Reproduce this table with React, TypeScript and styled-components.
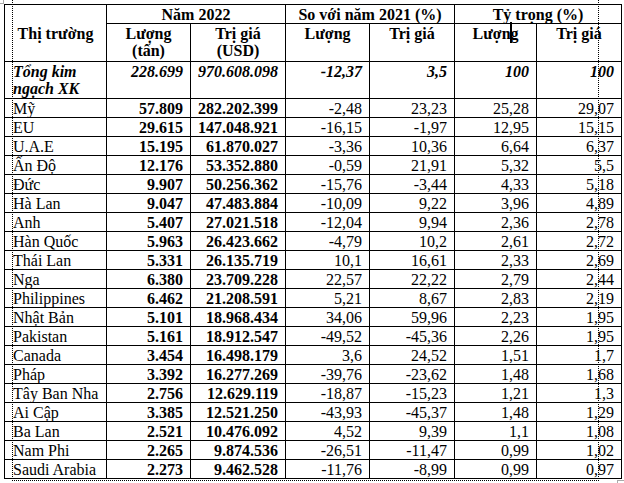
import React from "react";
import styled, { createGlobalStyle } from "styled-components";

const Global = createGlobalStyle`
  html, body { margin: 0; padding: 0; background: #fff; }
  body { font-family: "Liberation Serif", "Times New Roman", serif; color: #000; }
`;

const Page = styled.div`
  position: relative;
  width: 624px;
  height: 483px;
  overflow: hidden;
  padding: 4px 0 0 4px;
  box-sizing: border-box;
`;

const Table = styled.table`
  border-collapse: collapse;
  table-layout: fixed;
  width: 617px;
  font-size: 16px;
  line-height: 17px;
`;

const HeadCell = styled.th<{ $valign?: string }>`
  border: 1px solid #000;
  font-weight: bold;
  text-align: center;
  vertical-align: ${(p) => p.$valign || "top"};
  padding: 1px 4px 0 4px;
`;

const Row = styled.tr<{ $h: number }>`
  height: ${(p) => p.$h}px;
`;

const NameCell = styled.td<{ $total?: boolean }>`
  border: 1px solid #000;
  padding: ${(p) => (p.$total ? "1px 4px 0 8px" : "0 4px 0 8px")};
  text-align: left;
  vertical-align: ${(p) => (p.$total ? "top" : "middle")};
  font-weight: ${(p) => (p.$total ? "bold" : "normal")};
  font-style: ${(p) => (p.$total ? "italic" : "normal")};
  white-space: ${(p) => (p.$total ? "normal" : "nowrap")};
`;

const NumCell = styled.td<{ $bold?: boolean; $total?: boolean }>`
  border: 1px solid #000;
  padding: ${(p) => (p.$total ? "1px 7px 0 4px" : "0 7px 0 4px")};
  text-align: right;
  vertical-align: ${(p) => (p.$total ? "top" : "middle")};
  font-weight: ${(p) => (p.$bold || p.$total ? "bold" : "normal")};
  font-style: ${(p) => (p.$total ? "italic" : "normal")};
  white-space: nowrap;
`;

const DotV = styled.div<{ $x: number }>`
  position: absolute;
  left: ${(p) => p.$x}px;
  top: 0;
  height: 481px;
  border-left: 1px dotted #000;
  pointer-events: none;
`;

const DotH = styled.div`
  position: absolute;
  left: 12px;
  top: 480px;
  width: 587px;
  border-top: 1px dotted #000;
  pointer-events: none;
`;

const Caret = styled.div`
  position: absolute;
  left: 510px;
  top: 22px;
  width: 2px;
  height: 21px;
  background: #000;
`;

const CornerTL = styled.div`
  position: absolute;
  left: 0;
  top: 0;
  width: 3px;
  height: 3px;
  border-right: 1px solid #aaa;
  border-bottom: 1px solid #aaa;
`;

const CornerBR = styled.div`
  position: absolute;
  left: 617px;
  top: 480px;
  width: 8px;
  height: 4px;
  border-left: 1px solid #aaa;
  border-top: 1px solid #aaa;
`;

type R = [string, string, string, string, string, string, string];

const rows: R[] = [
  ["Mỹ", "57.809", "282.202.399", "-2,48", "23,23", "25,28", "29,07"],
  ["EU", "29.615", "147.048.921", "-16,15", "-1,97", "12,95", "15,15"],
  ["U.A.E", "15.195", "61.870.027", "-3,36", "10,36", "6,64", "6,37"],
  ["Ấn Độ", "12.176", "53.352.880", "-0,59", "21,91", "5,32", "5,5"],
  ["Đức", "9.907", "50.256.362", "-15,76", "-3,44", "4,33", "5,18"],
  ["Hà Lan", "9.047", "47.483.884", "-10,09", "9,22", "3,96", "4,89"],
  ["Anh", "5.407", "27.021.518", "-12,04", "9,94", "2,36", "2,78"],
  ["Hàn Quốc", "5.963", "26.423.662", "-4,79", "10,2", "2,61", "2,72"],
  ["Thái Lan", "5.331", "26.135.719", "10,1", "16,61", "2,33", "2,69"],
  ["Nga", "6.380", "23.709.228", "22,57", "22,22", "2,79", "2,44"],
  ["Philippines", "6.462", "21.208.591", "5,21", "8,67", "2,83", "2,19"],
  ["Nhật Bản", "5.101", "18.968.434", "34,06", "59,96", "2,23", "1,95"],
  ["Pakistan", "5.161", "18.912.547", "-49,52", "-45,36", "2,26", "1,95"],
  ["Canada", "3.454", "16.498.179", "3,6", "24,52", "1,51", "1,7"],
  ["Pháp", "3.392", "16.277.269", "-39,76", "-23,62", "1,48", "1,68"],
  ["Tây Ban Nha", "2.756", "12.629.119", "-18,87", "-15,23", "1,21", "1,3"],
  ["Ai Cập", "3.385", "12.521.250", "-43,93", "-45,37", "1,48", "1,29"],
  ["Ba Lan", "2.521", "10.476.092", "4,52", "9,39", "1,1", "1,08"],
  ["Nam Phi", "2.265", "9.874.536", "-26,51", "-11,47", "0,99", "1,02"],
  ["Saudi Arabia", "2.273", "9.462.528", "-11,76", "-8,99", "0,99", "0,97"],
];

const widths = [102, 84, 95, 84, 85, 82, 85];

export default function App() {
  return (
    <>
      <Global />
      <Page>
        <Table>
          <colgroup>
            {widths.map((w, i) => (
              <col key={i} style={{ width: w }} />
            ))}
          </colgroup>
          <thead>
            <Row $h={18}>
              <HeadCell rowSpan={2} $valign="middle">
                Thị trường
              </HeadCell>
              <HeadCell colSpan={2}>Năm 2022</HeadCell>
              <HeadCell colSpan={2}>So với năm 2021 (%)</HeadCell>
              <HeadCell colSpan={2}>Tỷ trọng (%)</HeadCell>
            </Row>
            <Row $h={38}>
              <HeadCell>
                Lượng
                <br />
                (tấn)
              </HeadCell>
              <HeadCell>
                Trị giá
                <br />
                (USD)
              </HeadCell>
              <HeadCell>Lượng</HeadCell>
              <HeadCell>Trị giá</HeadCell>
              <HeadCell>Lượng</HeadCell>
              <HeadCell>Trị giá</HeadCell>
            </Row>
          </thead>
          <tbody>
            <Row $h={37}>
              <NameCell $total>Tổng kim ngạch XK</NameCell>
              <NumCell $total>228.699</NumCell>
              <NumCell $total>970.608.098</NumCell>
              <NumCell $total>-12,37</NumCell>
              <NumCell $total>3,5</NumCell>
              <NumCell $total>100</NumCell>
              <NumCell $total>100</NumCell>
            </Row>
            {rows.map((r) => (
              <Row $h={19} key={r[0]}>
                <NameCell>{r[0]}</NameCell>
                <NumCell $bold>{r[1]}</NumCell>
                <NumCell $bold>{r[2]}</NumCell>
                <NumCell>{r[3]}</NumCell>
                <NumCell>{r[4]}</NumCell>
                <NumCell>{r[5]}</NumCell>
                <NumCell>{r[6]}</NumCell>
              </Row>
            ))}
          </tbody>
        </Table>
        <DotV $x={12} />
        <DotV $x={598} />
        <DotH />
        <Caret />
        <CornerTL />
        <CornerBR />
      </Page>
    </>
  );
}
